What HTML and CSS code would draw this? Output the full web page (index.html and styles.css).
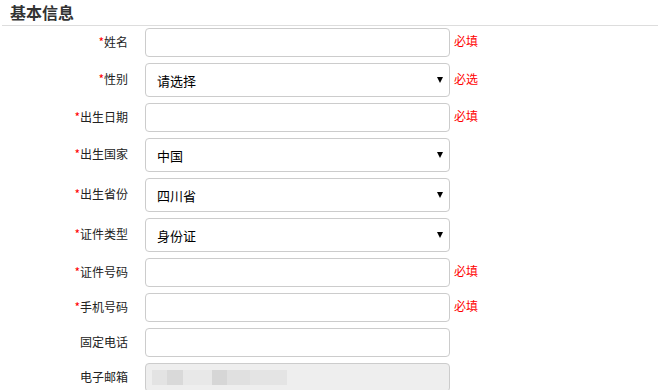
FILE: index.html
```html
<!DOCTYPE html>
<html lang="zh-CN">
<head>
    <meta charset="UTF-8">
    <meta name="viewport" content="width=device-width, initial-scale=1.0">
    <title>基本信息</title>
    <link rel="stylesheet" href="styles.css">
</head>
<body>
    <div class="section">
        <h2 class="section-title">基本信息</h2>
        <div class="form">
            <div class="row">
                <label class="label"><span class="star">*</span>姓名</label>
                <input type="text" class="field">
                <span class="hint">必填</span>
            </div>
            <div class="row">
                <label class="label"><span class="star">*</span>性别</label>
                <div class="select-wrap">
                    <select class="field select">
                        <option>请选择</option>
                        <option>男</option>
                        <option>女</option>
                    </select>
                </div>
                <span class="hint">必选</span>
            </div>
            <div class="row">
                <label class="label"><span class="star">*</span>出生日期</label>
                <input type="text" class="field">
                <span class="hint">必填</span>
            </div>
            <div class="row">
                <label class="label"><span class="star">*</span>出生国家</label>
                <div class="select-wrap">
                    <select class="field select">
                        <option>中国</option>
                    </select>
                </div>
            </div>
            <div class="row">
                <label class="label"><span class="star">*</span>出生省份</label>
                <div class="select-wrap">
                    <select class="field select">
                        <option>四川省</option>
                    </select>
                </div>
            </div>
            <div class="row">
                <label class="label"><span class="star">*</span>证件类型</label>
                <div class="select-wrap">
                    <select class="field select">
                        <option>身份证</option>
                    </select>
                </div>
            </div>
            <div class="row">
                <label class="label"><span class="star">*</span>证件号码</label>
                <input type="text" class="field">
                <span class="hint">必填</span>
            </div>
            <div class="row">
                <label class="label"><span class="star">*</span>手机号码</label>
                <input type="text" class="field">
                <span class="hint">必填</span>
            </div>
            <div class="row">
                <label class="label">固定电话</label>
                <input type="text" class="field">
            </div>
            <div class="row">
                <label class="label">电子邮箱</label>
                <div class="field readonly">
                    <span class="blur b1"></span>
                    <span class="blur b2"></span>
                    <span class="blur b3"></span>
                    <span class="blur b4"></span>
                    <span class="blur b5"></span>
                    <span class="blur b6"></span>
                </div>
            </div>
        </div>
    </div>
</body>
</html>
```

FILE: styles.css
```css
body {
    margin: 0;
    font-family: "Microsoft YaHei", "Noto Sans CJK SC", sans-serif;
    color: #333;
    background-color: white;
}
.section {
    margin: 0 2px;
}
.section-title {
    margin: 0;
    height: 25px;
    padding-left: 8px;
    font-size: 16px;
    font-weight: bold;
    line-height: 24px;
    color: #333;
    border-bottom: 1px solid #ddd;
}
.form {
    padding-top: 2px;
}
.row {
    display: flex;
    align-items: center;
    margin-bottom: 6px;
}
.label {
    width: 126px;
    margin-right: 17px;
    padding-bottom: 2px;
    line-height: 16px;
    text-align: right;
    font-size: 12px;
    color: #222;
}
.star {
    color: red;
}
.field {
    box-sizing: border-box;
    width: 305px;
    height: 29px;
    padding: 0 11px;
    border: 1px solid #ccc;
    border-radius: 4px;
    background-color: white;
    font-family: inherit;
    font-size: 13px;
    color: #000;
    outline: none;
}
.select-wrap {
    position: relative;
}
.select-wrap::after {
    content: "";
    position: absolute;
    right: 7px;
    top: 14px;
    border-left: 3.5px solid transparent;
    border-right: 3.5px solid transparent;
    border-top: 6px solid #000;
    pointer-events: none;
}
.select {
    height: 34px;
    -webkit-appearance: none;
    appearance: none;
}
.hint {
    margin-left: 4px;
    padding-bottom: 3px;
    line-height: 16px;
    font-size: 12px;
    color: red;
}
.readonly {
    display: flex;
    align-items: center;
    height: 29px;
    padding-left: 6px;
    background-color: #eee;
}
.blur {
    display: inline-block;
    height: 15px;
}
.b1 { width: 15px; background-color: #e3e3e3; }
.b2 { width: 16px; background-color: #d9d9d9; }
.b3 { width: 29px; background-color: #e8e8e8; }
.b4 { width: 15px; background-color: #d6d6d6; }
.b5 { width: 23px; background-color: #e0e0e0; }
.b6 { width: 37px; background-color: #e4e4e4; }
```
